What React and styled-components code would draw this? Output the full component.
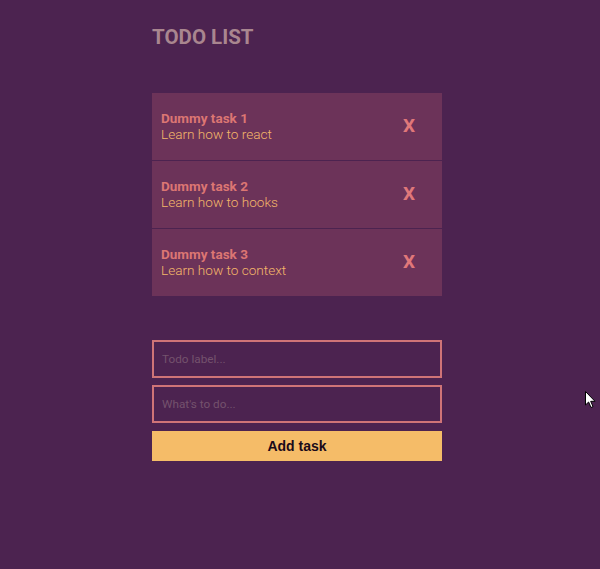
import React from 'react';
import styled, { createGlobalStyle } from 'styled-components';

const GlobalStyle = createGlobalStyle`
  html, body {
    margin: 0;
    padding: 0;
    background: #4c2350;
    font-family: Roboto, "Liberation Sans", sans-serif;
  }
`;

const Page = styled.div`
  position: relative;
  width: 600px;
  height: 569px;
  background: #4c2350;
  overflow: hidden;
`;

const Container = styled.div`
  width: 290px;
  margin-left: 152px;
  padding-top: 25px;
  display: flex;
  flex-direction: column;
`;

const Title = styled.h1`
  margin: 0;
  font-size: 20.5px;
  line-height: 24px;
  font-weight: 700;
  color: #a9868f;
`;

const TaskList = styled.ul`
  list-style: none;
  margin: 44px 0 0;
  padding: 0;
  display: flex;
  flex-direction: column;
`;

const TaskRow = styled.li`
  height: 67px;
  background: #6c3359;
  display: flex;
  align-items: center;
  justify-content: space-between;
  padding: 0 27px 2px 9px;
  box-sizing: border-box;
  & + & {
    margin-top: 1px;
  }
`;

const TaskText = styled.div`
  display: flex;
  flex-direction: column;
`;

const TaskLabel = styled.span`
  font-size: 13.5px;
  line-height: 16px;
  font-weight: 700;
  color: #dc7673;
`;

const TaskDesc = styled.span`
  font-size: 13.6px;
  line-height: 16px;
  font-weight: 300;
  color: #f4b76a;
`;

const Remove = styled.button`
  border: none;
  background: none;
  padding: 0;
  font-family: Roboto, "Liberation Sans", sans-serif;
  font-size: 19px;
  font-weight: 700;
  color: #e0787a;
  cursor: pointer;
`;

const Form = styled.form`
  margin-top: 44px;
  display: flex;
  flex-direction: column;
`;

const Input = styled.input`
  height: 38px;
  box-sizing: border-box;
  border: 2px solid #cf7477;
  background: #4c2350;
  padding: 0 8px;
  font-family: Roboto, "Liberation Sans", sans-serif;
  font-size: 11.75px;
  color: #f4b76a;
  outline: none;
  margin-bottom: ${p => p.$gap}px;
  &::placeholder {
    color: #74526d;
  }
`;

const AddButton = styled.button`
  height: 30px;
  border: none;
  background: #f5bc68;
  font-family: Arial, "Liberation Sans", sans-serif;
  font-size: 14px;
  font-weight: 700;
  color: #1a0a1a;
  cursor: pointer;
`;

const Cursor = styled.svg`
  position: absolute;
  left: 585px;
  top: 391px;
`;

const tasks = [
  { id: 1, label: 'Dummy task 1', text: 'Learn how to react' },
  { id: 2, label: 'Dummy task 2', text: 'Learn how to hooks' },
  { id: 3, label: 'Dummy task 3', text: 'Learn how to context' },
];

export default function App() {
  return (
    <Page>
      <GlobalStyle />
      <Container>
        <Title>TODO LIST</Title>
        <TaskList>
          {tasks.map(t => (
            <TaskRow key={t.id}>
              <TaskText>
                <TaskLabel>{t.label}</TaskLabel>
                <TaskDesc>{t.text}</TaskDesc>
              </TaskText>
              <Remove>X</Remove>
            </TaskRow>
          ))}
        </TaskList>
        <Form onSubmit={e => e.preventDefault()}>
          <Input $gap={7} placeholder="Todo label..." />
          <Input $gap={8} placeholder="What's to do..." />
          <AddButton type="submit">Add task</AddButton>
        </Form>
      </Container>
      <Cursor width="12" height="18" viewBox="0 0 12 18">
        <path d="M0.5 0.5 L0.5 14 L3.6 11 L6 16.5 L8 15.6 L5.7 10.3 L10 10.3 Z" fill="#fff" stroke="#000" strokeWidth="1" />
      </Cursor>
    </Page>
  );
}
